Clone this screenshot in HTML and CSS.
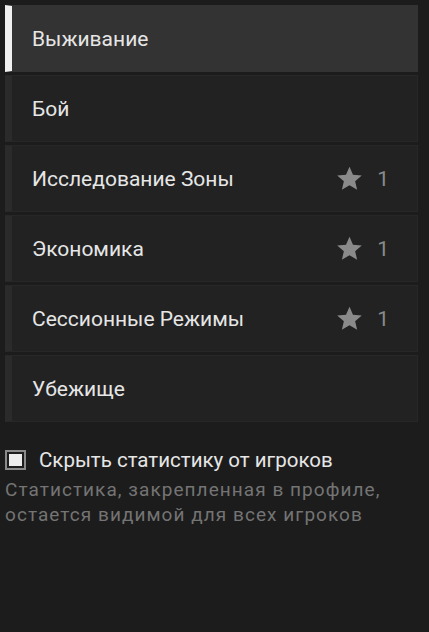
FILE: index.html
```html
<!DOCTYPE html>
<html lang="ru">
<head>
<meta charset="utf-8">
<link rel="stylesheet" href="styles.css">
</head>
<body>
<div class="panel">
  <ul class="tabs">
    <li class="tab active"><span class="tab-label">Выживание</span></li>
    <li class="tab"><span class="tab-label">Бой</span></li>
    <li class="tab"><span class="tab-label">Исследование Зоны</span>
      <span class="badge"><svg class="star" viewBox="0 0 24 24"><path d="M12 1.5l3.1 7.2 7.8.6-5.9 5.1 1.8 7.6L12 18l-6.8 4 1.8-7.6-5.9-5.1 7.8-.6z"/></svg><span class="count">1</span></span></li>
    <li class="tab"><span class="tab-label">Экономика</span>
      <span class="badge"><svg class="star" viewBox="0 0 24 24"><path d="M12 1.5l3.1 7.2 7.8.6-5.9 5.1 1.8 7.6L12 18l-6.8 4 1.8-7.6-5.9-5.1 7.8-.6z"/></svg><span class="count">1</span></span></li>
    <li class="tab"><span class="tab-label">Сессионные Режимы</span>
      <span class="badge"><svg class="star" viewBox="0 0 24 24"><path d="M12 1.5l3.1 7.2 7.8.6-5.9 5.1 1.8 7.6L12 18l-6.8 4 1.8-7.6-5.9-5.1 7.8-.6z"/></svg><span class="count">1</span></span></li>
    <li class="tab"><span class="tab-label">Убежище</span></li>
  </ul>
  <label class="option">
    <span class="checkbox"><span class="checkbox-mark"></span></span>
    <span class="option-label">Скрыть статистику от игроков</span>
  </label>
  <p class="hint">Статистика, закрепленная в профиле, остается видимой для всех игроков</p>
</div>
</body>
</html>
```
FILE: styles.css
```css
html, body {
  margin: 0;
  padding: 0;
  background: #1c1c1c;
  height: 100%;
}

body {
  font-family: Roboto, "Noto Sans", sans-serif;
  color: #e6e6e6;
}

.panel {
  padding: 5px 11px 0 5px;
}

.tabs {
  list-style: none;
  margin: 0;
  padding: 0;
  display: flex;
  flex-direction: column;
  gap: 3px;
}

.tab {
  height: 67px;
  box-sizing: border-box;
  display: flex;
  align-items: center;
  background: #222222;
  border: 1px solid #272727;
  border-left: 7px solid #2b2b2b;
  padding: 0 28px 0 20px;
  font-size: 21px;
}

.tab.active {
  background: #333333;
  border-color: #333333;
  border-left-color: #f0f0f0;
}

.tab-label {
  flex: 1;
}

.badge {
  display: flex;
  align-items: center;
  gap: 14px;
  color: #8a8a8a;
}

.star {
  width: 27px;
  height: 27px;
  fill: #8a8a8a;
}

.count {
  font-size: 21px;
}

.option {
  display: flex;
  align-items: center;
  gap: 13px;
  margin-top: 26px;
}

.checkbox {
  width: 21px;
  height: 20px;
  box-sizing: border-box;
  border: 2px solid #8a8a8a;
  padding: 2px;
  display: flex;
}

.checkbox-mark {
  flex: 1;
  background: #ececec;
}

.option-label {
  font-size: 20.5px;
  color: #e6e6e6;
}

.hint {
  margin: 5px 0 0;
  font-size: 19px;
  letter-spacing: 1.05px;
  line-height: 25px;
  color: #747474;
  max-width: 412px;
}
```
